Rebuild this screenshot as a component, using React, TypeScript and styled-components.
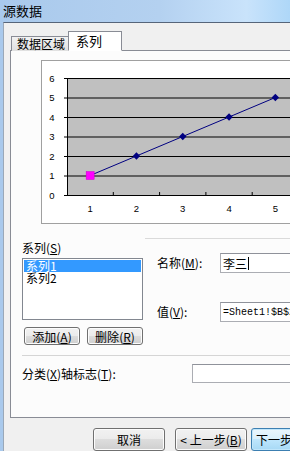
import React from 'react';
import styled, {createGlobalStyle} from 'styled-components';

const GlobalStyle = createGlobalStyle`
  html, body {
    margin: 0;
    padding: 0;
    background: #f0f0f0;
    overflow: hidden;
  }
  body {
    width: 290px;
    height: 451px;
    font-family: "Noto Sans CJK SC", "DejaVu Sans", sans-serif;
    font-size: 12px;
    color: #000;
  }
`;

const Frame = styled.div`
  width: 290px;
  height: 451px;
  overflow: hidden;
  display: flex;
  flex-direction: column;
  background: linear-gradient(to right, #a9c9ec, #b4d1f0 55%, #c9e3fb 85%, #aed7f8);
`;

const TitleBar = styled.div`
  height: 22px;
  flex: none;
  display: flex;
  align-items: center;
  padding-left: 3px;
  font-size: 13px;
  line-height: 22px;
`;

const Client = styled.div`
  flex: 1;
  margin-left: 3px;
  border-top: 1px solid #56657a;
  border-left: 1px solid #9aa8b8;
  background: #f0f0f0;
  display: flex;
  flex-direction: column;
  padding-left: 6px;
`;

const TabStrip = styled.div`
  display: flex;
  align-items: flex-end;
  height: 20px;
  margin-top: 8px;
  padding-left: 1px;
  position: relative;
  z-index: 1;
  margin-bottom: -1px;
`;

const Tab = styled.div<{ $active?: boolean }>`
  box-sizing: border-box;
  border: 1px solid #898c95;
  border-bottom: ${p => (p.$active ? '1px solid #fff' : 'none')};
  height: ${p => (p.$active ? '20px' : '15px')};
  margin-left: ${p => (p.$active ? '-1px' : '0')};
  padding: ${p => (p.$active ? '0 19px 0 7px' : '0 3px 0 5px')};
  background: ${p => (p.$active ? '#fff' : 'linear-gradient(#f2f2f2, #e0e0e0)')};
  font-size: ${p => (p.$active ? '13px' : '12px')};
  line-height: ${p => (p.$active ? '17px' : '14px')};
  white-space: nowrap;
`;

const Panel = styled.div`
  box-sizing: border-box;
  width: 320px;
  height: 368px;
  border: 1px solid #898c95;
  border-right: none;
  background: #fcfcfc;
  display: flex;
  flex-direction: column;
`;

const ChartBox = styled.div`
  box-sizing: border-box;
  margin: 9px 0 0 30px;
  width: 280px;
  height: 164px;
  border: 1px solid #a0a0a0;
  background: #fff;
  flex: none;

  svg {
    display: block;
  }
`;

const Lower = styled.div`
  display: grid;
  grid-template-columns: 134px 1fr;
  align-items: start;
`;

const SeriesColumn = styled.div`
  padding: 17px 0 0 11px;
  display: flex;
  flex-direction: column;
`;

const Caption = styled.div`
  line-height: 14px;
  white-space: nowrap;
`;

const ListBox = styled.div`
  box-sizing: border-box;
  margin-top: 3px;
  width: 121px;
  height: 62px;
  border: 1px solid #828790;
  background: #fff;
  padding: 1px;
`;

const ListItem = styled.div<{ $selected?: boolean }>`
  height: 12px;
  line-height: 12px;
  padding-left: 2px;
  background: ${p => (p.$selected ? '#3399ff' : 'transparent')};
  color: ${p => (p.$selected ? '#fff' : '#000')};
`;

const ButtonRow = styled.div`
  display: flex;
  gap: 7px;
  margin: 7px 0 0 2px;
`;

const Button = styled.button<{ $small?: boolean; $default?: boolean }>`
  box-sizing: border-box;
  flex: none;
  width: ${p => (p.$small ? '56px' : '72px')};
  height: ${p => (p.$small ? '18px' : '23px')};
  padding: 0;
  border: 1px solid ${p => (p.$default ? '#3c7fb1' : '#707070')};
  border-radius: 3px;
  background: ${p =>
    p.$default
      ? 'linear-gradient(#eaf6fd 0%, #d9f0fc 50%, #bee6fd 50%, #a7d9f5 100%)'
      : 'linear-gradient(#f2f2f2 0%, #ebebeb 50%, #dddddd 50%, #cfcfcf 100%)'};
  box-shadow: inset 0 0 0 1px ${p => (p.$default ? '#c0e6fb' : '#fcfcfc')};
  font-family: "Noto Sans CJK SC", "DejaVu Sans", sans-serif;
  font-size: 12px;
  line-height: ${p => (p.$small ? '15px' : '20px')};
  color: #000;
  white-space: nowrap;
  overflow: hidden;
`;

const FieldsColumn = styled.div`
  margin-top: 14px;
  border-top: 1px solid #dadada;
  padding: 14px 0 0 12px;
  display: flex;
  flex-direction: column;
  gap: 29px;
`;

const FieldRow = styled.div<{ $labelWidth: number }>`
  display: grid;
  grid-template-columns: ${p => p.$labelWidth}px 1fr;
  align-items: center;
  height: ${p => (p.$labelWidth > 100 ? '19px' : '20px')};
`;

const TextBox = styled.div<{ $mono?: boolean }>`
  box-sizing: border-box;
  height: 100%;
  border: 1px solid #abadb3;
  border-top-color: #8f929a;
  background: #fff;
  padding-left: 2px;
  display: flex;
  align-items: center;
  white-space: nowrap;
  overflow: hidden;
  font-family: ${p => (p.$mono ? '"Liberation Mono", monospace' : 'inherit')};
  font-size: ${p => (p.$mono ? '10px' : '12px')};
`;

const Caret = styled.span`
  display: inline-block;
  width: 0;
  height: 13px;
  border-left: 1px solid #000;
  margin-left: 1px;
`;

const Separator = styled.div`
  margin: 10px 0 0 11px;
  height: 0;
  border-top: 1px solid #d5d5d5;
`;

const CategoryRow = styled(FieldRow)`
  margin: 8px 0 0 11px;
`;

const Footer = styled.div`
  display: flex;
  margin: 10px 0 0 83px;
  gap: 10px;

  & > :last-child {
    margin-left: -6px;
  }
`;

const Key: React.FC<{ k: string }> = ({k}) => (
  <>
    (<u>{k}</u>)
  </>
);

const Chart: React.FC = () => {
  const left = 25;
  const top = 17;
  const bottom = 134;
  const unit = (bottom - top) / 6;
  const cat = 46.3;
  const right = left + cat * 5;
  const px = (i: number) => left + cat * (i - 0.5);
  const py = (v: number) => bottom - v * unit;
  const values = [1, 2, 3, 4, 5];

  return (
    <svg width="278" height="162" viewBox="0 0 278 162">
      <rect x={left} y={top} width={right - left} height={bottom - top} fill="#c0c0c0"/>
      {[0, 1, 2, 3, 4, 5, 6].map(v => (
        <g key={v}>
          <line x1={left - 3} x2={right} y1={py(v) + 0.5} y2={py(v) + 0.5} stroke="#000" strokeWidth="1"/>
          <text x="10" y={py(v) + 3.5} fontSize="9.5" fontFamily="Liberation Sans, sans-serif" textAnchor="middle">{v}</text>
        </g>
      ))}
      <line x1={left + 0.5} x2={left + 0.5} y1={top} y2={bottom + 1} stroke="#000"/>
      {[1, 2, 3, 4].map(k => (
        <line key={k} x1={left + cat * k} x2={left + cat * k} y1={bottom - 3} y2={bottom} stroke="#000"/>
      ))}
      {values.map(i => (
        <text key={i} x={px(i)} y="151" fontSize="9.5" fontFamily="Liberation Sans, sans-serif" textAnchor="middle">{i}</text>
      ))}
      <polyline
        points={values.map(i => `${px(i)},${py(i)}`).join(' ')}
        fill="none"
        stroke="#000080"
        strokeWidth="1"
      />
      {values.slice(1).map(i => (
        <polygon
          key={i}
          points={`${px(i)},${py(i) - 3.7} ${px(i) + 3.7},${py(i)} ${px(i)},${py(i) + 3.7} ${px(i) - 3.7},${py(i)}`}
          fill="#000080"
        />
      ))}
      <rect x={px(1) - 4} y={py(1) - 4} width="8" height="8" fill="#ff00ff" stroke="#d000d0" strokeWidth="0.5"/>
    </svg>
  );
};

const App: React.FC = () => {
  return (
    <>
      <GlobalStyle/>
      <Frame>
        <TitleBar>源数据</TitleBar>
        <Client>
          <TabStrip>
            <Tab>数据区域</Tab>
            <Tab $active>系列</Tab>
          </TabStrip>
          <Panel>
            <ChartBox>
              <Chart/>
            </ChartBox>
            <Lower>
              <SeriesColumn>
                <Caption>系列<Key k="S"/></Caption>
                <ListBox>
                  <ListItem $selected>系列1</ListItem>
                  <ListItem>系列2</ListItem>
                </ListBox>
                <ButtonRow>
                  <Button $small>添加<Key k="A"/></Button>
                  <Button $small>删除<Key k="R"/></Button>
                </ButtonRow>
              </SeriesColumn>
              <FieldsColumn>
                <FieldRow $labelWidth={63}>
                  <Caption>名称<Key k="M"/>:</Caption>
                  <TextBox>李三<Caret/></TextBox>
                </FieldRow>
                <FieldRow $labelWidth={63}>
                  <Caption>值<Key k="V"/>:</Caption>
                  <TextBox $mono>=Sheet1!$B$2:$B$6</TextBox>
                </FieldRow>
              </FieldsColumn>
            </Lower>
            <Separator/>
            <CategoryRow $labelWidth={170}>
              <Caption>分类<Key k="X"/>轴标志<Key k="T"/>:</Caption>
              <TextBox/>
            </CategoryRow>
          </Panel>
          <Footer>
            <Button>取消</Button>
            <Button>&lt; 上一步<Key k="B"/></Button>
            <Button $default>下一步<Key k="N"/> &gt;</Button>
          </Footer>
        </Client>
      </Frame>
    </>
  );
};

export default App;
